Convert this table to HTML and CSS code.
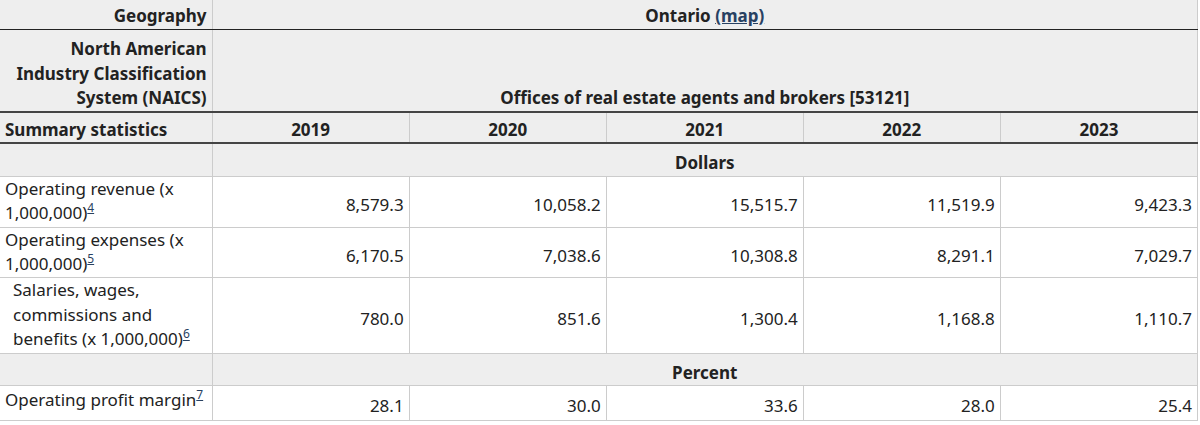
FILE: index.html
```html
<!DOCTYPE html>
<html lang="en">
<head>
<meta charset="utf-8">
<title>Offices of real estate agents and brokers, summary statistics</title>
<link rel="stylesheet" href="styles.css">
</head>
<body>
<table class="stats">
  <colgroup>
    <col class="c-stub">
    <col class="c-yr">
    <col class="c-yr">
    <col class="c-yr">
    <col class="c-yr">
    <col class="c-yr last">
  </colgroup>
  <thead>
    <tr class="r-geo">
      <th class="stub-r">Geography</th>
      <th colspan="5" class="span">Ontario <a href="#map">(map)</a></th>
    </tr>
    <tr class="r-naics">
      <th class="stub-r">North American Industry Classification System (NAICS)</th>
      <th colspan="5" class="span bottom">Offices of real estate agents and brokers [53121]</th>
    </tr>
    <tr class="r-years">
      <th class="stub-l">Summary statistics</th>
      <th class="yr">2019</th>
      <th class="yr">2020</th>
      <th class="yr">2021</th>
      <th class="yr">2022</th>
      <th class="yr">2023</th>
    </tr>
  </thead>
  <tbody>
    <tr class="r-unit">
      <th class="stub-e"></th>
      <th colspan="5" class="span">Dollars</th>
    </tr>
    <tr>
      <th class="rowh">Operating revenue (x 1,000,000)<sup><a href="#fn4">4</a></sup></th>
      <td>8,579.3</td>
      <td>10,058.2</td>
      <td>15,515.7</td>
      <td>11,519.9</td>
      <td>9,423.3</td>
    </tr>
    <tr>
      <th class="rowh">Operating expenses (x 1,000,000)<sup><a href="#fn5">5</a></sup></th>
      <td>6,170.5</td>
      <td>7,038.6</td>
      <td>10,308.8</td>
      <td>8,291.1</td>
      <td>7,029.7</td>
    </tr>
    <tr>
      <th class="rowh indent">Salaries, wages, commissions and benefits (x 1,000,000)<sup><a href="#fn6">6</a></sup></th>
      <td>780.0</td>
      <td>851.6</td>
      <td>1,300.4</td>
      <td>1,168.8</td>
      <td>1,110.7</td>
    </tr>
    <tr class="r-unit">
      <th class="stub-e"></th>
      <th colspan="5" class="span">Percent</th>
    </tr>
    <tr>
      <th class="rowh single">Operating profit margin<sup><a href="#fn7">7</a></sup></th>
      <td>28.1</td>
      <td>30.0</td>
      <td>33.6</td>
      <td>28.0</td>
      <td>25.4</td>
    </tr>
  </tbody>
</table>
</body>
</html>
```

FILE: styles.css
```css
html, body {
  margin: 0;
  padding: 0;
  background: #ffffff;
}

.stats {
  margin-top: -2px;
  width: 1198px;
  table-layout: fixed;
  border-collapse: collapse;
  font-family: "Noto Sans", "Open Sans", sans-serif;
  font-size: 17px;
  line-height: 1.4375;
  color: #222;
}

.c-stub { width: 212px; }
.c-yr { width: 197px; }

.stats th,
.stats td {
  border: 1px solid #cccccc;
  padding: 6px 5px 1px;
}

.stats tr > :first-child {
  border-left: 0;
}

.stats thead th {
  background: #eeeeee;
  font-weight: 700;
  vertical-align: top;
}

.r-geo th {
  border-top: 0;
  border-bottom: 1px solid #222;
}

.r-naics th,
.r-years th {
  border-bottom: 2px solid #444;
}

.stats .r-naics th {
  padding-top: 7px;
  padding-bottom: 0;
}

.stats .r-years th {
  padding-top: 5px;
  padding-bottom: 0;
}

.stub-r { text-align: right; }
.stub-l { text-align: left; }
.span { text-align: center; }
.bottom { vertical-align: bottom !important; }
.yr { text-align: center; }

.stats .r-unit th {
  background: #eeeeee;
  font-weight: 700;
  padding: 7px 5px 0;
}

.stats .rowh {
  background: #ffffff;
  font-weight: 400;
  text-align: left;
  vertical-align: top;
  padding: 0 5px 1px;
}

.stats .rowh.indent {
  padding-left: 13px;
}

.stats .rowh.single {
  padding-top: 2px;
}

.stats td {
  text-align: right;
  vertical-align: middle;
  padding: 8px 5px 1px;
}

.stats a {
  color: #284162;
  text-decoration: underline;
}

.stats sup {
  font-size: 12px;
  line-height: 1;
}
```
